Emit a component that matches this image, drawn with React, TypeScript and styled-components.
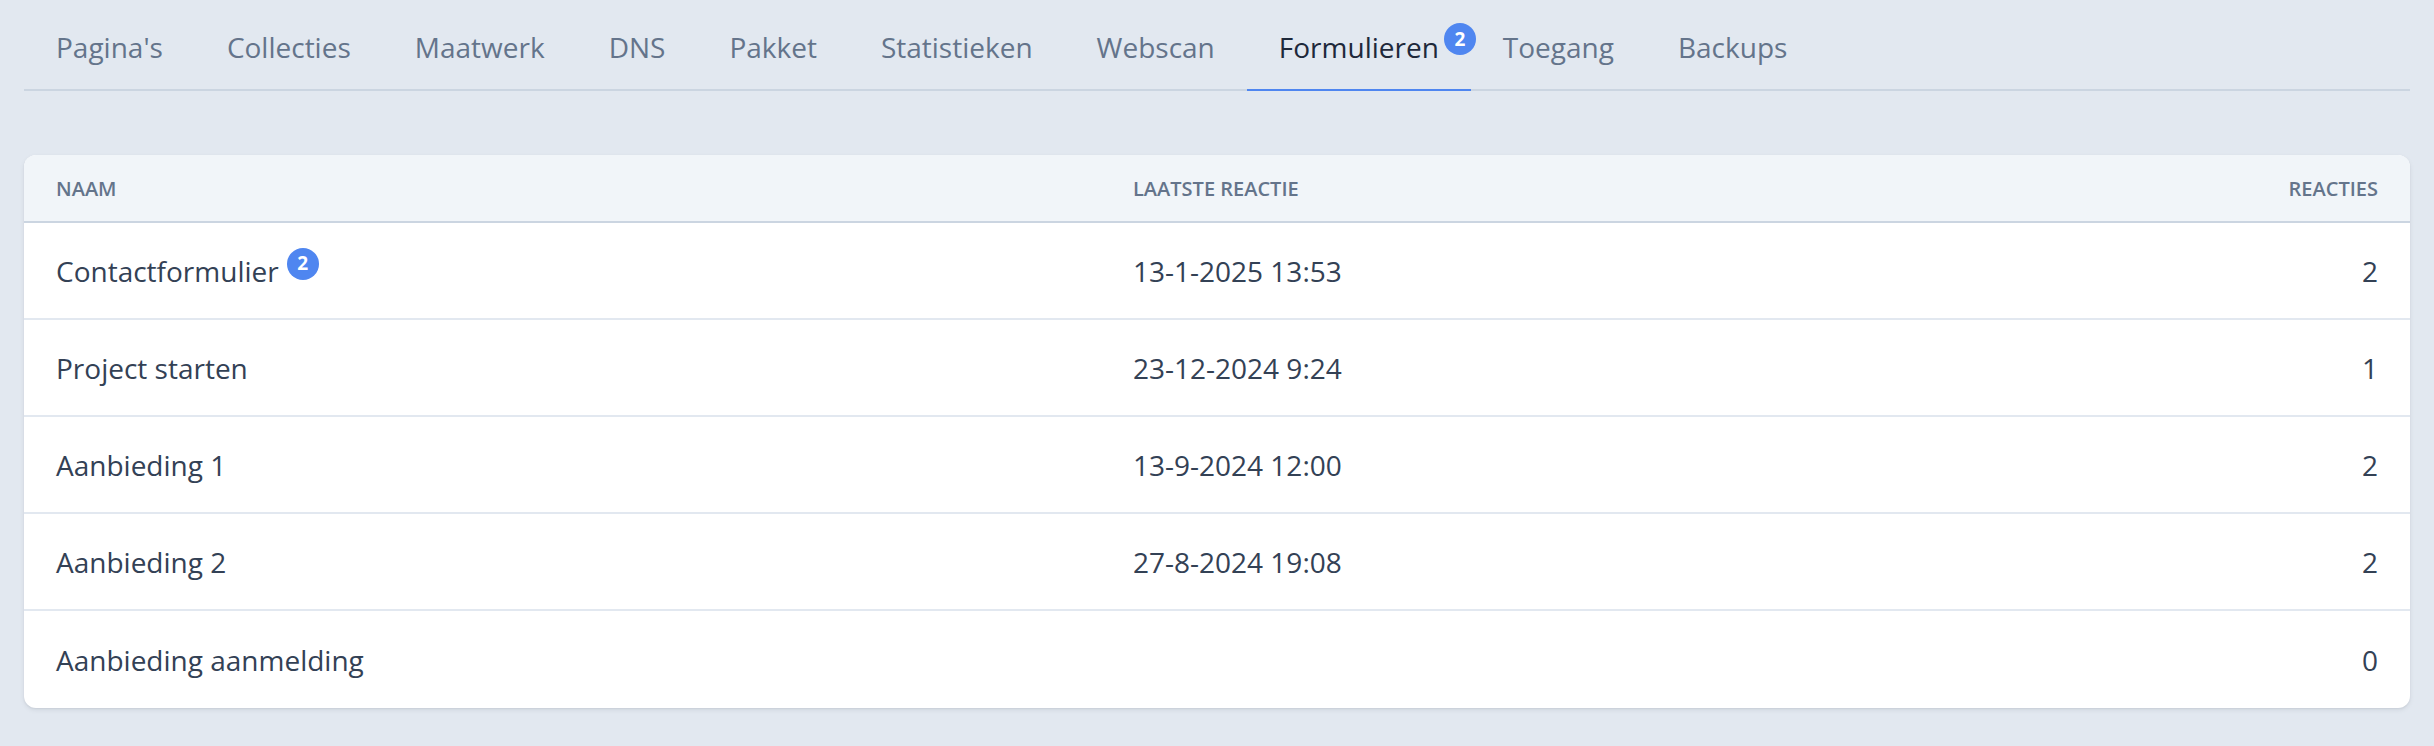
import React from "react";
import styled, { createGlobalStyle } from "styled-components";

const GlobalStyle = createGlobalStyle`
  html, body {
    margin: 0;
    padding: 0;
    background: #e2e8f0;
    font-family: "Open Sans", "Noto Sans", sans-serif;
    -webkit-font-smoothing: antialiased;
  }
  * { box-sizing: border-box; }
`;

const Page = styled.div`
  padding: 0 24px 38px 24px;
  display: flex;
  flex-direction: column;
  gap: 64px;
`;

const TabBar = styled.nav`
  display: flex;
  border-bottom: 2px solid #cbd5e1;
`;

const Tab = styled.div<{ $active?: boolean }>`
  padding: 27px 32px 22px 32px;
  margin-bottom: -2px;
  line-height: 40px;
  font-size: 28px;
  color: ${(p) => (p.$active ? "#1e293b" : "#64748b")};
  border-bottom: 2px solid ${(p) => (p.$active ? "#4f86f0" : "transparent")};
  white-space: nowrap;
`;

const TabLabel = styled.span`
  position: relative;
  display: inline-block;
`;

const Badge = styled.span`
  display: inline-flex;
  align-items: center;
  justify-content: center;
  width: 32px;
  height: 32px;
  border-radius: 50%;
  background: #4f86f0;
  color: #ffffff;
  font-size: 19px;
  font-weight: 700;
  line-height: 1;
`;

const TabBadge = styled(Badge)`
  position: absolute;
  left: calc(100% + 5px);
  top: -4px;
`;

const RowBadge = styled(Badge)`
  position: relative;
  top: -7px;
  margin-left: 8px;
`;

const Card = styled.div`
  background: #ffffff;
  border-radius: 12px;
  overflow: hidden;
  box-shadow: 0 2px 5px rgba(15, 23, 42, 0.08), 0 1px 2px rgba(15, 23, 42, 0.06);
`;

const HeaderRow = styled.div`
  display: grid;
  grid-template-columns: 1077px 1fr auto;
  height: 68px;
  align-items: center;
  background: #f1f5f9;
  border-bottom: 2px solid #cbd5e1;
`;

const HeadCell = styled.div<{ $right?: boolean }>`
  padding: 0 32px;
  font-size: 20px;
  font-weight: 600;
  color: #64748b;
  text-transform: uppercase;
  text-align: ${(p) => (p.$right ? "right" : "left")};
`;

const Row = styled.div<{ $last?: boolean }>`
  display: grid;
  grid-template-columns: 1077px 1fr auto;
  height: 97px;
  align-items: center;
  border-bottom: ${(p) => (p.$last ? "none" : "2px solid #e2e8f0")};
`;

const Cell = styled.div<{ $right?: boolean }>`
  padding: 0 32px;
  font-size: 28px;
  color: #334155;
  display: flex;
  align-items: center;
  justify-content: ${(p) => (p.$right ? "flex-end" : "flex-start")};
  white-space: nowrap;
`;

const tabs = [
  "Pagina's",
  "Collecties",
  "Maatwerk",
  "DNS",
  "Pakket",
  "Statistieken",
  "Webscan",
  "Formulieren",
  "Toegang",
  "Backups",
];

const rows = [
  { name: "Contactformulier", badge: 2, date: "13-1-2025 13:53", count: 2 },
  { name: "Project starten", date: "23-12-2024 9:24", count: 1 },
  { name: "Aanbieding 1", date: "13-9-2024 12:00", count: 2 },
  { name: "Aanbieding 2", date: "27-8-2024 19:08", count: 2 },
  { name: "Aanbieding aanmelding", date: "", count: 0 },
];

export default function App() {
  return (
    <>
      <GlobalStyle />
      <Page>
        <TabBar>
          {tabs.map((t) => (
            <Tab key={t} $active={t === "Formulieren"}>
              <TabLabel>
                {t}
                {t === "Formulieren" && <TabBadge>2</TabBadge>}
              </TabLabel>
            </Tab>
          ))}
        </TabBar>
        <Card>
          <HeaderRow>
            <HeadCell>Naam</HeadCell>
            <HeadCell>Laatste reactie</HeadCell>
            <HeadCell $right>Reacties</HeadCell>
          </HeaderRow>
          {rows.map((r, i) => (
            <Row key={r.name} $last={i === rows.length - 1}>
              <Cell>
                {r.name}
                {r.badge ? <RowBadge>{r.badge}</RowBadge> : null}
              </Cell>
              <Cell>{r.date}</Cell>
              <Cell $right>{r.count}</Cell>
            </Row>
          ))}
        </Card>
      </Page>
    </>
  );
}
